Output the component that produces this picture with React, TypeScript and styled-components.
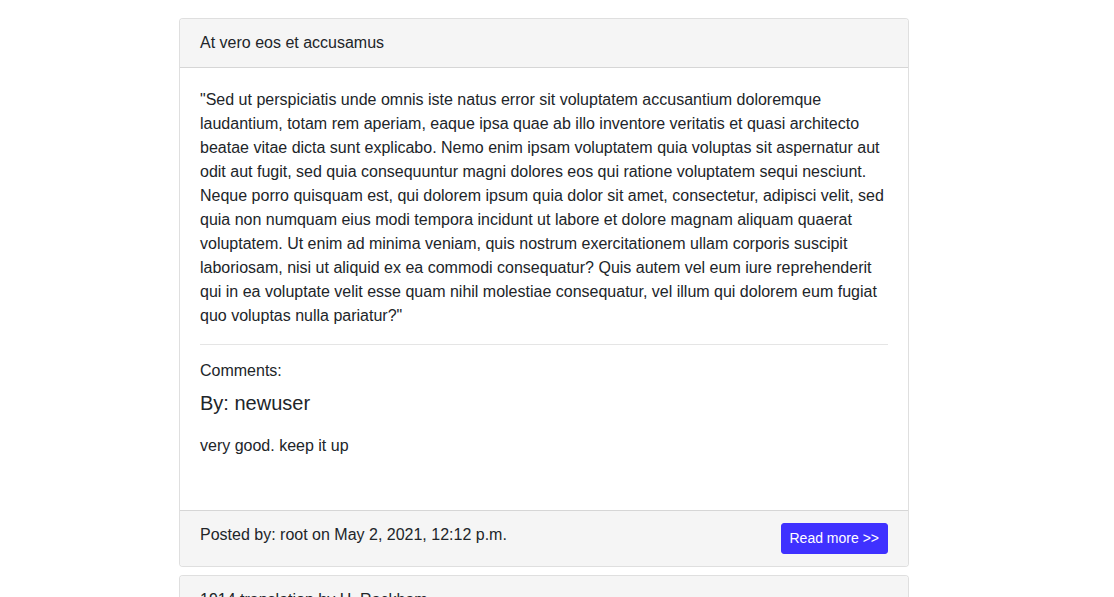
import styled, { createGlobalStyle } from "styled-components";

const GlobalStyle = createGlobalStyle`
    body {
        margin: 0;
        background: #fff;
        font-family: "Liberation Sans", Arial, sans-serif;
        font-size: 16px;
        line-height: 1.5;
        color: #212529;
    }
    * {
        box-sizing: border-box;
    }
`;

const Page = styled.main`
    width: 730px;
    margin: 18px 0 0 179px;
`;

const Card = styled.article`
    display: flex;
    flex-direction: column;
    background: #fff;
    border: 1px solid rgba(0, 0, 0, 0.125);
    border-radius: 4px;
    margin-bottom: 8px;
    overflow: hidden;
`;

const CardHeader = styled.div`
    padding: 12px 20px;
    background: #f5f5f5;
    border-bottom: 1px solid rgba(0, 0, 0, 0.125);
`;

const CardBody = styled.div`
    padding: 20px 20px 52px;
`;

const Text = styled.p`
    margin: 0 0 16px;
`;

const Divider = styled.hr`
    margin: 0 0 14px;
    border: 0;
    border-top: 1px solid rgba(0, 0, 0, 0.1);
`;

const CommentsLabel = styled.div`
    margin-bottom: 8px;
`;

const Author = styled.h5`
    margin: 0 0 19px;
    font-size: 20px;
    font-weight: 400;
    line-height: 1.2;
`;

const CommentText = styled.p`
    margin: 0;
`;

const CardFooter = styled.div`
    display: flex;
    justify-content: space-between;
    align-items: flex-start;
    padding: 12px 20px;
    background: #f5f5f5;
    border-top: 1px solid rgba(0, 0, 0, 0.125);
`;

const ReadMore = styled.a`
    display: inline-block;
    padding: 4px 8px;
    font-size: 14px;
    line-height: 21px;
    color: #fff;
    background: #3f31ff;
    border: 1px solid #3f31ff;
    border-radius: 3px;
    text-decoration: none;
    cursor: pointer;
`;

const posts = [
    {
        title: "At vero eos et accusamus",
        body: "\"Sed ut perspiciatis unde omnis iste natus error sit voluptatem accusantium doloremque laudantium, totam rem aperiam, eaque ipsa quae ab illo inventore veritatis et quasi architecto beatae vitae dicta sunt explicabo. Nemo enim ipsam voluptatem quia voluptas sit aspernatur aut odit aut fugit, sed quia consequuntur magni dolores eos qui ratione voluptatem sequi nesciunt. Neque porro quisquam est, qui dolorem ipsum quia dolor sit amet, consectetur, adipisci velit, sed quia non numquam eius modi tempora incidunt ut labore et dolore magnam aliquam quaerat voluptatem. Ut enim ad minima veniam, quis nostrum exercitationem ullam corporis suscipit laboriosam, nisi ut aliquid ex ea commodi consequatur? Quis autem vel eum iure reprehenderit qui in ea voluptate velit esse quam nihil molestiae consequatur, vel illum qui dolorem eum fugiat quo voluptas nulla pariatur?\"",
        comments: [{ user: "newuser", text: "very good. keep it up" }],
        author: "root",
        date: "May 2, 2021, 12:12 p.m.",
    },
    {
        title: "1914 translation by H. Rackham",
        body: "\"But I must explain to you how all this mistaken idea of denouncing pleasure and praising pain was born and I will give you a complete account of the system.\"",
        comments: [],
        author: "root",
        date: "May 2, 2021, 12:10 p.m.",
    },
];

export default function App() {
    return (
        <>
            <GlobalStyle />
            <Page>
                {posts.map((post) => (
                    <Card key={post.title}>
                        <CardHeader>{post.title}</CardHeader>
                        <CardBody>
                            <Text>{post.body}</Text>
                            <Divider />
                            <CommentsLabel>Comments:</CommentsLabel>
                            {post.comments.map((c) => (
                                <div key={c.user}>
                                    <Author>By: {c.user}</Author>
                                    <CommentText>{c.text}</CommentText>
                                </div>
                            ))}
                        </CardBody>
                        <CardFooter>
                            <span>
                                Posted by: {post.author} on {post.date}
                            </span>
                            <ReadMore>Read more &gt;&gt;</ReadMore>
                        </CardFooter>
                    </Card>
                ))}
            </Page>
        </>
    );
}
